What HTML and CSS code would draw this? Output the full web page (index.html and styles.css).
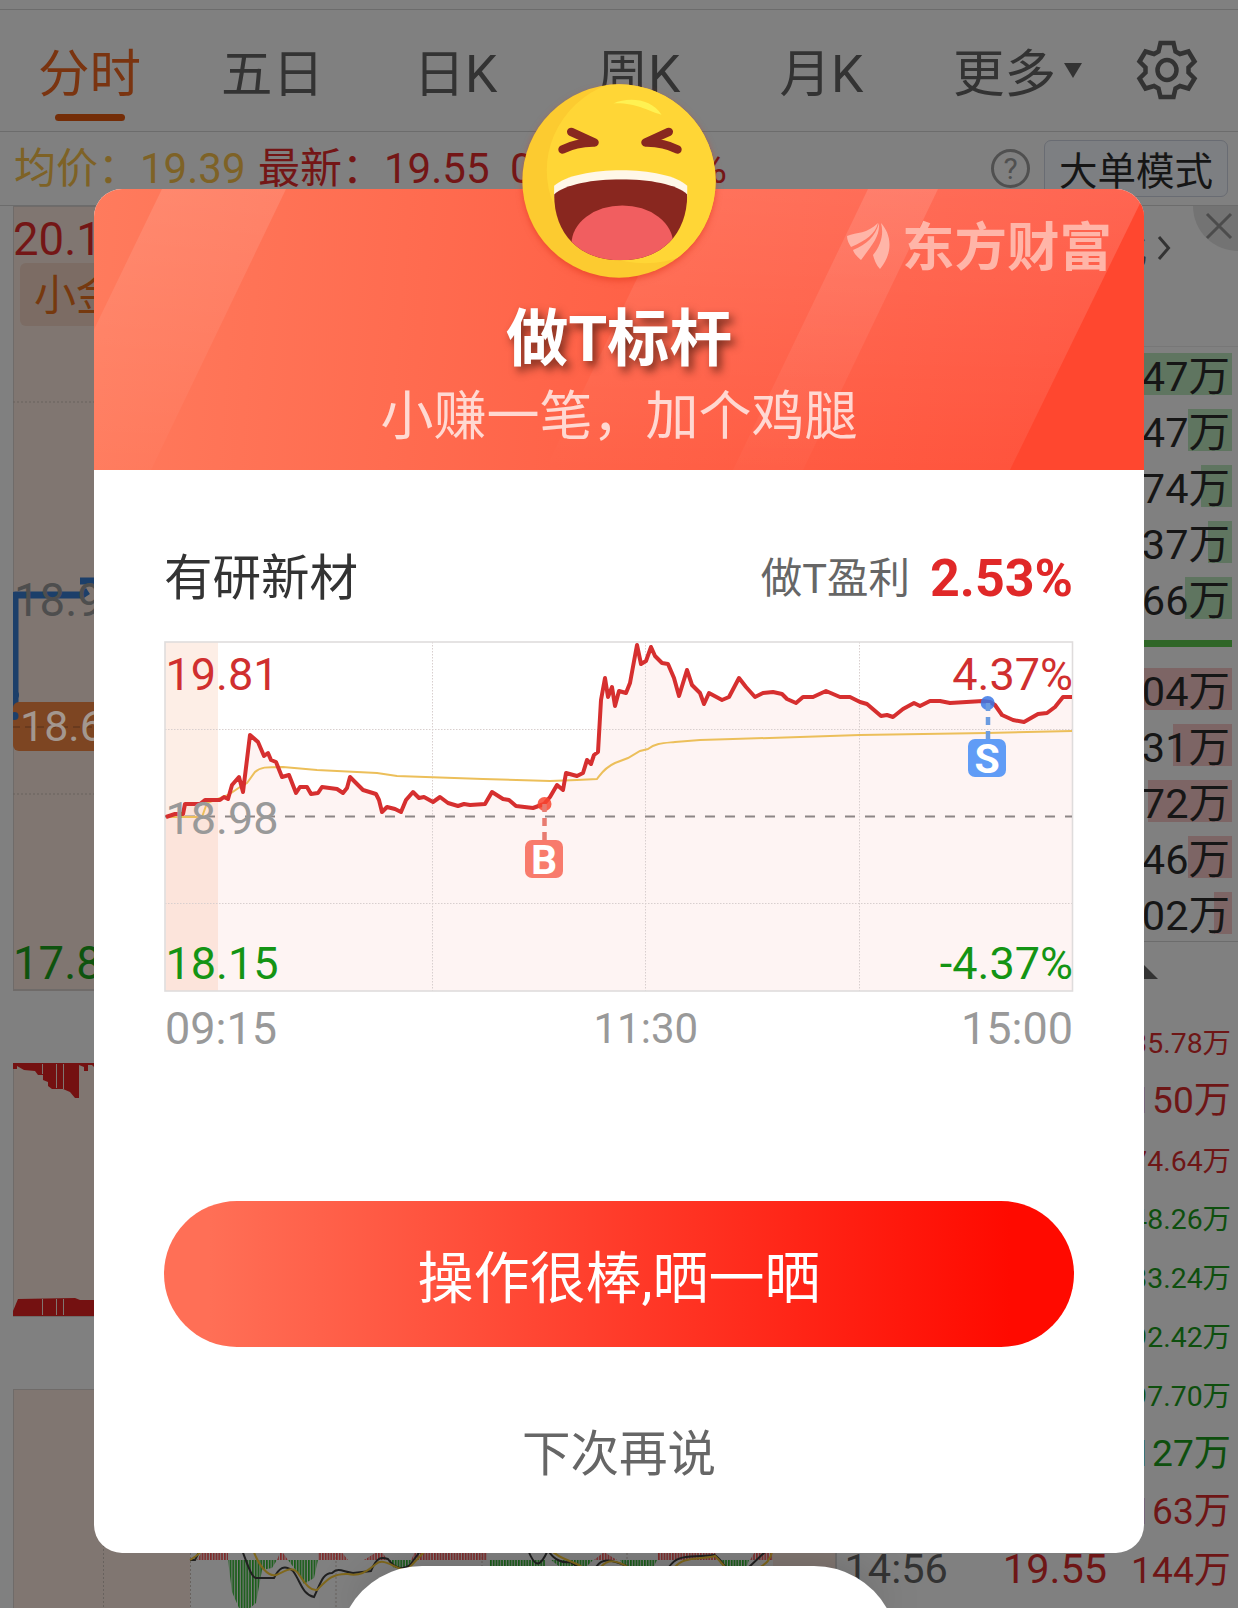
FILE: index.html
```html
<!DOCTYPE html>
<html lang="zh-CN">
<head>
  <meta charset="UTF-8" />
  <meta name="viewport" content="width=device-width, initial-scale=1.0" />
  <title>做T标杆</title>
  <link rel="stylesheet" href="styles.css">
</head>
<body>
  <div class="page">
    <nav class="tabs">
      <div class="tab active">分时</div>
      <div class="tab">五日</div>
      <div class="tab">日K</div>
      <div class="tab">周K</div>
      <div class="tab">月K</div>
      <div class="tab more">更多</div>
      <svg class="gear" viewBox="-32 -32 64 64" width="64" height="64">
        <path d="M-6.500 -27H6.500L8.500 -18.500L13 -16L21.500 -18.500L27.500 -8.500L21.500 -2.500V2.500L27.500 8.500L21.500 18.500L13 16L8.500 18.500L6.500 27H-6.500L-8.500 18.500L-13 16L-21.500 18.500L-27.500 8.500L-21.500 2.500V-2.500L-27.500 -8.500L-21.500 -18.500L-13 -16L-8.500 -18.500Z"/>
        <ellipse rx="9.500" ry="10"/>
      </svg>
    </nav>

    <div class="info">
      <span class="avg">均价：19.39</span>
      <span class="last">最新：19.55</span>
      <span class="change">0.57 3.00%</span>
      <span class="help">?</span>
      <span class="mode">大单模式</span>
    </div>

    <div class="main">
      <div class="charts">
        <svg class="price-chart" viewBox="13 206 823 785" width="823" height="785">
          <rect class="pink" x="13" y="206" width="823" height="784"/>
          <path class="dots" d="M13 402H836M13 794H836"/>
          <text class="t-red" x="13" y="255">20.18</text>
          <rect class="badge" x="20" y="263" width="170" height="63" rx="6"/>
          <text class="t-orange" x="34" y="310">小金</text>
          <path class="blue" d="M15 716V595H82L88 591M80 581H110"/>
          <circle class="blue-dot" cx="15" cy="695" r="4"/>
          <rect class="price-tag" x="13" y="702" width="120" height="49" rx="6"/>
          <circle class="blue-dot" cx="14.500" cy="716" r="4"/>
          <text class="t-gray" x="14" y="616">18.98</text>
          <path class="tag-dash" d="M13 727H94"/>
          <text class="t-light" x="20" y="741">18.68</text>
          <text class="t-green" x="13" y="979">17.81</text>
        </svg>
        <svg class="volume-chart" viewBox="13 1063 823 254" width="823" height="254">
          <rect class="pink" x="13" y="1063" width="823" height="253"/>
          <path class="volume" d="M13 1063H110V1068L94 1067L92 1065H88V1071H84V1067L79 1065V1098H75L70 1092L63 1089H52L48 1086V1082L43 1080V1075H38L35 1071L24 1070L17 1066V1069H13Z"/>
          <path class="volume" d="M13 1316V1311L18 1299L75 1298L80 1300H110V1316Z"/>
          <path class="gaps" d="M42.500 1064V1074M56.500 1064V1088M63.500 1064V1089M42.500 1299V1315M56.500 1299V1315M63.500 1299V1315"/>
        </svg>
        <svg class="macd-chart" viewBox="13 1389 823 219" width="823" height="219">
          <defs>
            <pattern id="red" width="2.800" height="10" patternUnits="userSpaceOnUse"><rect class="bar-red" width="1.700" height="10"/></pattern>
            <pattern id="green" width="2.800" height="10" patternUnits="userSpaceOnUse"><rect class="bar-green" width="1.700" height="10"/></pattern>
          </defs>
          <rect class="pink" x="13" y="1389" width="823" height="230"/>
          <rect class="plain" x="190" y="1389" width="583" height="230"/>
          <path class="dots" d="M103.500 1389V1608M190.500 1389V1608M336 1389V1608M482 1389V1608M627 1389V1608"/>
          <path fill="url(#red)" d="M197 1560L203 1550H228V1560ZM277 1560L281 1550L288 1560ZM318 1560V1550H340L348 1560ZM364 1560L380 1550L388 1560ZM411 1560L416 1550H487V1560ZM594 1560L604 1552L617 1560ZM657 1560V1550H714L718 1560ZM750 1560L756 1550H773V1560Z"/>
          <path fill="url(#green)" d="M228 1560H277L272 1568L262 1570L256 1603L250 1608H239L232 1592ZM288 1560H318L314 1578L304 1584L298 1573ZM388 1560H412L407 1568H394ZM489 1560H545V1566H489ZM551 1560H593L586 1567H560ZM620 1560H657L653 1568H625ZM718 1560H749L746 1568H724Z"/>
          <path class="line-dark" d="M190 1560H195L200 1550M242 1550C248 1566 252 1579 257 1578H274C279 1568 284 1564 293 1571C301 1582 302 1594 314 1597C321 1582 323 1573 332 1573C339 1567 343 1572 353 1573L371 1571C377 1556 382 1557 388 1559C394 1568 403 1571 410 1565L421 1550M528 1550C535 1568 540 1568 548 1550C554 1561 564 1563 570 1562L578 1567M596 1567C602 1558 609 1559 627 1566M669 1567C678 1554 687 1558 714 1555C722 1559 723 1567 729 1569M748 1568L765 1552"/>
          <path class="line-gold" d="M190 1560L196 1556L203 1550M253 1550C259 1566 268 1577 276 1575C286 1571 293 1564 300 1576C306 1585 311 1591 317 1590C326 1581 332 1573 348 1574C362 1577 369 1569 376 1564C385 1556 399 1573 408 1569L426 1550M551 1550C560 1560 572 1560 582 1567M601 1567C608 1559 616 1560 628 1567M675 1567C684 1556 699 1560 715 1556C724 1565 725 1568 729 1570M758 1569C766 1563 770 1561 772 1552"/>
        </svg>
      </div>

      <div class="side">
        <div class="side-head"><span>化</span>
          <svg width="14" height="26" viewBox="0 0 14 26"><path d="M2 2L11.500 13L2 24"/></svg>
          <div class="close"><svg width="28" height="28" viewBox="0 0 28 28"><path d="M2 2L26 26M26 2L2 26"/></svg></div>
        </div>
        <div class="orders sell">
          <div class="order"><i class="depth" style="width:110px"></i>47万</div>
          <div class="order"><i class="depth" style="width:44px"></i>47万</div>
          <div class="order"><i class="depth" style="width:31px"></i>74万</div>
          <div class="order"><i class="depth" style="width:24px"></i>37万</div>
          <div class="order"><i class="depth" style="width:47px"></i>66万</div>
        </div>
        <div class="divider"></div>
        <div class="orders buy">
          <div class="order"><i class="depth" style="width:110px"></i>04万</div>
          <div class="order"><i class="depth" style="width:59px"></i>31万</div>
          <div class="order"><i class="depth" style="width:84px"></i>72万</div>
          <div class="order"><i class="depth" style="width:44px"></i>46万</div>
          <div class="order"><i class="depth" style="width:18px"></i>02万</div>
        </div>
        <div class="fold"><i></i></div>
        <div class="deals">
          <div class="deal up small">35.78万</div>
          <div class="deal up">150万</div>
          <div class="deal up small">74.64万</div>
          <div class="deal down small">48.26万</div>
          <div class="deal down small">33.24万</div>
          <div class="deal down small">92.42万</div>
          <div class="deal down small">97.70万</div>
          <div class="deal down">127万</div>
          <div class="deal up">163万</div>
          <div class="deal up latest"><span class="time">14:56</span><span class="price">19.55</span>144万</div>
        </div>
      </div>
    </div>
  </div>

  <div class="modal">
    <div class="modal-head">
      <svg class="stripes" width="1050" height="281" viewBox="94 189 1050 281" preserveAspectRatio="none">
        <defs>
          <linearGradient id="fade" x1="0" y1="0" x2="0" y2="1"><stop offset="0" stop-color="#fff" stop-opacity=".12"/><stop offset="1" stop-color="#fff" stop-opacity=".02"/></linearGradient>
          <linearGradient id="glow" x1="0" y1="0" x2="0" y2="1"><stop offset="0" stop-color="#fff" stop-opacity=".12"/><stop offset="1" stop-color="#fff" stop-opacity="0"/></linearGradient>
        </defs>
        <path fill="url(#fade)" d="M162 189H286L151 470H26Z"/>
        <path fill="url(#glow)" d="M680 189H1148L1010 470H545Z"/>
        <path fill="url(#fade)" d="M868 189H938L803 470H733Z"/>
        <path fill="#ff472f" d="M1147 189V470H1010Z"/>
      </svg>
      <div class="brand">
        <svg width="44" height="48" viewBox="0 0 44 48"><path d="M0 14C10 10 20 12 31 1C28 12 20 18 4 25C2 22 0 18 0 14ZM32 1C33 15 25 23 14 38C10 35 7 31 6 28C20 22 28 15 32 1ZM34 1C44 12 47 30 33 47C29 43 27 37 26 33C34 23 37 12 34 1Z"/></svg>
        <span>东方财富</span>
      </div>
      <h2>做T标杆</h2>
      <p>小赚一笔，加个鸡腿</p>
      <svg class="emoji" width="194" height="194" viewBox="97 42 580 580">
        <defs><clipPath id="mouth"><path d="M193 372C260 312 528 312 591 372C591 490 515 569 392 569C269 569 193 490 193 372Z"/></clipPath>
        <clipPath id="face"><circle cx="387" cy="332" r="289"/></clipPath></defs>
        <circle cx="387" cy="332" r="289" fill="#fccb30"/>
        <ellipse cx="465" cy="300" rx="294" ry="278" fill="#ffd636" clip-path="url(#face)"/>
        <path d="M370 100C415 80 485 85 514 134C465 120 440 98 370 100Z" fill="#fff152"/>
        <path d="M244 185L314 217Q260 216 218 238M536 185L466 217Q520 216 562 238" fill="none" stroke="#89271f" stroke-width="25" stroke-linecap="round" stroke-linejoin="round"/>
        <path d="M193 346C262 284 526 284 591 346V378H193Z" fill="#fff7e8"/>
        <g clip-path="url(#mouth)"><rect x="190" y="320" width="405" height="250" fill="#89271f"/><ellipse cx="397" cy="520" rx="152" ry="115" fill="#f15e60"/></g>
      </svg>
    </div>

    <div class="modal-body">
      <div class="summary">
        <span class="stock">有研新材</span>
        <span class="label">做T盈利</span>
        <span class="profit">2.53%</span>
      </div>

      <svg class="t-chart" viewBox="164 641 910 352" width="910" height="352">
        <rect x="165" y="642" width="53" height="349" fill="#fdeee6"/>
        <path fill="#f04030" fill-opacity=".06" d="M166 817L175 814H183L185 804H200L205 800H220L224 797L228 799L232 785L239 777L243 792L250 735L258 742L264 756L268 753L271 760L276 762L282 777L289 775L296 793L300 787H307L311 794L318 793L322 787L337 789L343 793L347 788L350 777L363 790L376 794L379 800L382 812L387 807L395 809L401 812L406 800L413 792L419 798L424 797L433 802L440 797L448 803L458 806L464 804L470 805L485 804L492 792L503 799L509 800L516 806L533 808L544 804L550 797L557 785L563 790L566 773L577 776L583 773L587 760L591 764L594 755L598 752L601 700L605 678L608 697L612 687L615 706L619 691L626 693L630 683L637 645L641 664L646 661L651 647L655 656L662 663L668 664L674 678L679 696L687 670L692 685L700 693L704 704L709 693L722 700L729 697L739 678L746 687L755 697L763 693L773 692L782 694L787 699L796 703L803 697H813L826 691L840 697H850L860 702L867 704L881 716L887 715L893 717L903 709L914 703L920 706L930 701H940L950 703L983 701L990 702L995 705L1002 715L1013 720L1024 722L1038 714L1047 713L1055 707L1063 697H1072V991H166Z"/>
        <path class="grid-line" d="M165 729.500H1072M165 903.500H1072M432.500 642V991M645.500 642V991M859.500 642V991"/>
        <rect class="frame" x="165" y="642" width="907.500" height="349"/>
        <path class="dash" d="M165 816.500H1072"/>
        <path class="avg-line" d="M166 817H202L207 803L228 795L240 787L247 783L255 772C260 767 266 767 283 767L317 770L377 773L397 776L483 779L550 781L577 780L597 779C601 774 604 768 615 763L628 758L640 751L648 749C655 743 665 743 675 742L700 740L733 739L800 737L860 735L987 733L1072 731"/>
        <path class="price-line" d="M166 817L175 814H183L185 804H200L205 800H220L224 797L228 799L232 785L239 777L243 792L250 735L258 742L264 756L268 753L271 760L276 762L282 777L289 775L296 793L300 787H307L311 794L318 793L322 787L337 789L343 793L347 788L350 777L363 790L376 794L379 800L382 812L387 807L395 809L401 812L406 800L413 792L419 798L424 797L433 802L440 797L448 803L458 806L464 804L470 805L485 804L492 792L503 799L509 800L516 806L533 808L544 804L550 797L557 785L563 790L566 773L577 776L583 773L587 760L591 764L594 755L598 752L601 700L605 678L608 697L612 687L615 706L619 691L626 693L630 683L637 645L641 664L646 661L651 647L655 656L662 663L668 664L674 678L679 696L687 670L692 685L700 693L704 704L709 693L722 700L729 697L739 678L746 687L755 697L763 693L773 692L782 694L787 699L796 703L803 697H813L826 691L840 697H850L860 702L867 704L881 716L887 715L893 717L903 709L914 703L920 706L930 701H940L950 703L983 701L990 702L995 705L1002 715L1013 720L1024 722L1038 714L1047 713L1055 707L1063 697H1072"/>
        <g class="buy-mark">
          <circle cx="544.500" cy="804" r="7"/>
          <path d="M544.500 804V840"/>
          <rect x="525" y="840" width="38" height="38" rx="7"/>
          <text x="544" y="873.500">B</text>
        </g>
        <g class="sell-mark">
          <circle cx="987.700" cy="703" r="7"/>
          <path d="M988 703V739"/>
          <rect x="968" y="739" width="38" height="38" rx="7"/>
          <text x="987" y="772.500">S</text>
        </g>
        <text class="c-red" x="165.500" y="690">19.81</text>
        <text class="c-red" x="1073" y="690" text-anchor="end">4.37%</text>
        <text class="c-gray" x="165.500" y="834">18.98</text>
        <text class="c-green" x="165.500" y="979">18.15</text>
        <text class="c-green" x="1073" y="979" text-anchor="end">-4.37%</text>
      </svg>

      <div class="times"><span>09:15</span><span class="noon">11:30</span><span>15:00</span></div>
      <button class="share">操作很棒,晒一晒</button>
      <div class="later">下次再说</div>
    </div>
  </div>

  <svg class="sheet" width="560" height="42" viewBox="0 0 560 42"><path d="M11.300 42A84 84 0 0 1 84 0H476A84 84 0 0 1 548.700 42Z"/></svg>
</body>
</html>
```

FILE: styles.css
```css
* {
  margin: 0;
  padding: 0;
  box-sizing: border-box;
}

body {
  position: relative;
  width: 1238px;
  height: 1608px;
  overflow: hidden;
  background: #808080;
  color: #333;
  font-family: Roboto, 'Noto Sans CJK SC', sans-serif;
}

/* dimmed page behind the dialog */
.page {
  display: flex;
  flex-direction: column;
  height: 1608px;
  padding-top: 9px;
  overflow: hidden;
}

.tabs {
  display: grid;
  grid-template-columns: repeat(6, 183px) 1fr;
  height: 123px;
  margin-left: -2px;
  border-top: 1px solid #6c6c6c;
  border-bottom: 1px solid #6c6c6c;
}

.tab {
  position: relative;
  height: 121px;
  font-size: 51.5px;
  line-height: 130px;
  text-align: center;
  color: #333;
}

.tab.active {
  color: #7a3410;
}

.tab.active::after {
  content: '';
  position: absolute;
  left: 57px;
  bottom: 10px;
  width: 70px;
  height: 7px;
  border-radius: 4px;
  background: #742d07;
}

.tab.more::after {
  content: '';
  position: absolute;
  left: 151px;
  top: 53px;
  border: 9px solid transparent;
  border-top: 15px solid #333;
  border-bottom: none;
}

.gear {
  margin: 28px 0 0 39px;
  fill: none;
  stroke: #333;
  stroke-width: 4.5;
}

.info {
  display: flex;
  align-items: center;
  height: 74px;
  padding: 0 10px 0 14px;
  border-bottom: 1px solid #6c6c6c;
  font-size: 42px;
  line-height: 60px;
  white-space: nowrap;
}

.avg {
  width: 244px;
  color: #7e6226;
}

.last {
  width: 252px;
  color: #741616;
}

.change {
  color: #741616;
  word-spacing: 12px;
}

.help {
  width: 39px;
  height: 39px;
  margin-left: auto;
  border: 3px solid #505050;
  border-radius: 50%;
  font-size: 30px;
  line-height: 34px;
  text-align: center;
  color: #505050;
}

.mode {
  width: 184px;
  height: 57px;
  margin-left: 14px;
  border: 1px solid #696c73;
  border-radius: 7px;
  background: #7d7f82;
  font-size: 38.5px;
  line-height: 61px;
  text-align: center;
  color: #161616;
}

.main {
  display: grid;
  grid-template-columns: 836px 402px;
}

.charts {
  display: flex;
  flex-direction: column;
  padding-left: 13px;
}

.charts text {
  font-size: 45.5px;
}

.volume-chart,
.macd-chart {
  margin-top: 72px;
}

.pink {
  fill: #807671;
  stroke: #6f6b69;
  stroke-width: 2;
}

.plain {
  fill: #808080;
}

.dots {
  fill: none;
  stroke: #68625e;
  stroke-dasharray: 2 2;
}

.badge {
  fill: #7c6c64;
}

.blue {
  fill: none;
  stroke: #1c3f6a;
  stroke-width: 7;
  stroke-linejoin: round;
}

.blue-dot {
  fill: #1c3f6a;
}

.price-tag {
  fill: #7d4522;
}

.tag-dash {
  stroke: #57301a;
  stroke-dasharray: 7 5;
}

.t-red { fill: #741616; }
.charts .t-orange { fill: #76390f; font-size: 42px; }
.t-gray { fill: #4e4e4e; }
.charts .t-light { fill: #a3978f; font-size: 43px; }
.t-green { fill: #0e530e; }

.volume {
  fill: #741111;
}

.gaps {
  stroke: #807671;
}

.bar-red { fill: #7e2b2b; }
.bar-green { fill: #175c17; }

.line-dark,
.line-gold {
  fill: none;
  stroke: #202020;
  stroke-width: 2;
}

.line-gold {
  stroke: #80681c;
}

.side {
  border-left: 1px solid #6c6c6c;
}

.side-head {
  position: relative;
  display: flex;
  align-items: center;
  height: 141px;
  padding: 0 0 57px 274px;
  border-bottom: 1px solid #777;
  font-size: 36px;
}

.side-head svg {
  margin-left: 10px;
  fill: none;
  stroke: #333;
  stroke-width: 3;
}

.close {
  position: absolute;
  top: 0;
  right: 0;
  width: 45px;
  height: 45px;
  border-bottom-left-radius: 45px;
  background: #737373;
}

.side-head .close svg {
  margin: 6px 0 0 12px;
  stroke: #4c4c4c;
}

.orders {
  display: flex;
  flex-direction: column;
  gap: 14px;
  padding: 6px 6px 0 0;
}

.order {
  position: relative;
  z-index: 0;
  height: 42px;
  padding-right: 2px;
  font-size: 41.5px;
  line-height: 48px;
  text-align: right;
  color: #161616;
}

.depth {
  position: absolute;
  z-index: -1;
  top: 0;
  right: 0;
  height: 42px;
}

.sell .depth { background: #5f7560; }
.buy .depth { background: #7d6565; }

.divider {
  height: 7px;
  margin: 21px 6px 15px 0;
  background: #2f6627;
}

.fold {
  height: 73px;
  margin-top: 7px;
  padding: 22px 0 0 291px;
  border-top: 1px solid #6c6c6c;
}

.fold i {
  display: block;
  width: 30px;
  border: 15px solid transparent;
  border-top: none;
  border-bottom-color: #333;
}

.deals {
  display: grid;
  grid-template-rows: repeat(9, 58.8px) 56px;
  padding: 1px 7px 0 0;
}

.deal {
  font-size: 37.2px;
  line-height: 53px;
  text-align: right;
}

.deal.small {
  font-size: 28.4px;
  line-height: 58px;
}

.deal.latest {
  line-height: 50px;
}

.up { color: #6e1616; }
.down { color: #0e4f0e; }

.time,
.price {
  margin-right: 55px;
  font-size: 41.5px;
  color: #333;
}

.price {
  margin-right: 24px;
  color: #6e1616;
}

/* dialog */
.modal {
  position: absolute;
  z-index: 1;
  left: 94px;
  top: 189px;
  width: 1050px;
  height: 1364px;
  border-radius: 28px;
  background: #fff;
}

.modal-head {
  position: relative;
  height: 281px;
  padding-top: 112px;
  border-radius: 28px 28px 0 0;
  background: linear-gradient(95deg, #ff7b5d 0%, #ff6449 45%, #ff4f39 100%);
  text-align: center;
}

.stripes {
  position: absolute;
  left: 0;
  top: 0;
  border-radius: 28px 28px 0 0;
}

.brand {
  position: absolute;
  right: 32px;
  top: 33px;
  display: flex;
  gap: 11px;
  color: #ffb5a8;
}

.brand svg {
  fill: #ffb5a8;
}

.brand span {
  font-size: 52.5px;
  font-weight: 700;
  line-height: 52px;
}

.modal-head h2 {
  position: relative;
  font-size: 62.5px;
  line-height: 78px;
  color: #fff;
  text-shadow: 4px 5px 8px rgba(60, 20, 10, 0.7);
}

.modal-head p {
  position: relative;
  font-size: 53px;
  line-height: 76px;
  color: rgba(255, 255, 255, 0.75);
}

.emoji {
  position: absolute;
  left: 428px;
  top: -105px;
  filter: drop-shadow(0 3px 3px rgba(220, 50, 20, 0.5));
}

.modal-body {
  display: flex;
  flex-direction: column;
  padding: 69px 70px 0;
}

.summary {
  display: flex;
  align-items: center;
  height: 80px;
  padding: 0 1px 0 0;
  line-height: 82px;
}

.stock {
  margin-right: auto;
  font-size: 48.5px;
  line-height: 76px;
}

.label {
  margin-right: 20px;
  font-size: 41.5px;
  color: #666;
}

.profit {
  font-size: 52px;
  font-weight: 700;
  color: #e02828;
}

.t-chart {
  margin-top: 22px;
  overflow: visible;
}

.t-chart text {
  font-size: 45px;
}

.grid-line {
  fill: none;
  stroke: #d8cfce;
  stroke-dasharray: 1.5 1.5;
}

.frame {
  fill: none;
  stroke: #dfdcdc;
  stroke-width: 1.6;
}

.dash {
  stroke: #8d8686;
  stroke-width: 1.8;
  stroke-dasharray: 10 10;
}

.avg-line {
  fill: none;
  stroke: #ecbf5a;
  stroke-width: 2;
}

.price-line {
  fill: none;
  stroke: #d62f2f;
  stroke-width: 4;
  stroke-linejoin: round;
}

.c-red { fill: #d02f2f; }
.c-gray { fill: #999; }
.c-green { fill: #149414; }

.buy-mark path,
.sell-mark path {
  stroke: #e87b70;
  stroke-width: 4.5;
  stroke-dasharray: 8 6;
}

.buy-mark rect { fill: #f87b6c; }
.buy-mark circle { fill: #f8452f; fill-opacity: 0.85; }
.sell-mark path { stroke: #6c9ce0; }
.sell-mark rect { fill: #609cf6; }
.sell-mark circle { fill: #3b78e6; fill-opacity: 0.85; }

.t-chart g text {
  font-size: 41px;
  font-weight: 700;
  text-anchor: middle;
  fill: #fff;
}

.times {
  display: grid;
  grid-template-columns: 1fr 104px 1fr;
  height: 60px;
  margin-top: 6px;
  padding-left: 1px;
  font-size: 45px;
  line-height: 59px;
  color: #999;
}

.times span:last-child {
  padding-right: 1px;
  text-align: right;
}

.times .noon {
  margin: 0 -26px 0 26px;
  font-size: 42px;
  text-align: center;
}

.share {
  height: 146px;
  margin-top: 142px;
  padding-top: 5px;
  border: none;
  border-radius: 73px;
  background: linear-gradient(90deg, #ff6f56 5%, #ff0a00 93%);
  font-family: inherit;
  font-size: 56px;
  line-height: 147px;
  color: #fff;
}

.later {
  margin-top: 68px;
  font-size: 48.5px;
  line-height: 80px;
  text-align: center;
  color: #666;
}

.sheet {
  position: absolute;
  left: 338px;
  top: 1566px;
  fill: #fff;
  filter: drop-shadow(0 0 20px rgba(0, 0, 0, 0.18));
}
```
